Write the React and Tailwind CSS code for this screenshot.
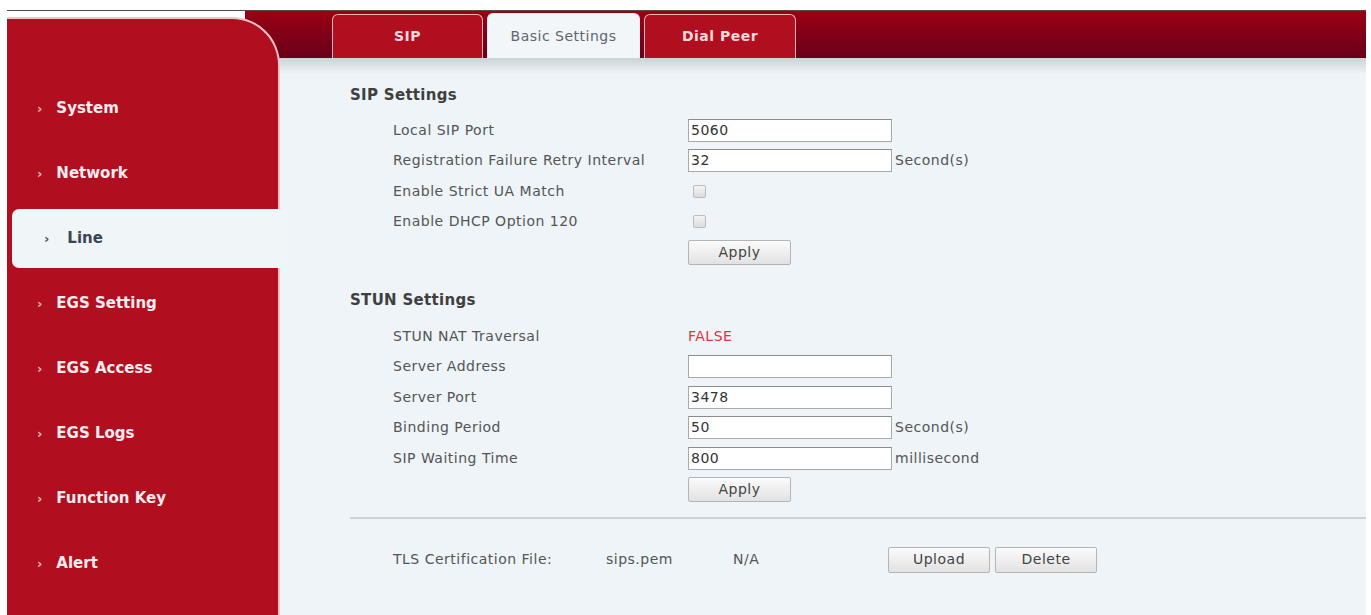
import React from "react";

const menu = ["System", "Network", "Line", "EGS Setting", "EGS Access", "EGS Logs", "Function Key", "Alert"];

function Btn({ children, className = "" }) {
  return (
    <button className={"h-[25px] border border-[#b4b4b4] rounded-[2px] bg-gradient-to-b from-[#fbfbfb] to-[#e2e2e2] text-[14px] tracking-[0.5px] text-[#444] " + className}>
      {children}
    </button>
  );
}

function Field({ value = "" }) {
  return (
    <div className="w-[204px] h-[23px] bg-white border border-[#a9a9a9] border-t-[#8c8c8c] text-[14px] text-[#333] leading-[21px] pl-[2px]">
      {value}
    </div>
  );
}

function Check() {
  return <div className="ml-[5px] w-[13px] h-[13px] rounded-[2px] border border-[#b9bcc0] bg-gradient-to-b from-[#f4f4f4] to-[#dcdcdc]" />;
}

function Row({ label, children, unit }) {
  return (
    <div className="flex items-center h-[30.5px]">
      <div className="w-[295px] text-[#555]">{label}</div>
      {children}
      {unit && <span className="ml-[3px] text-[#555]">{unit}</span>}
    </div>
  );
}

export default function App() {
  return (
    <div className="h-[615px] bg-white pt-[10px] pl-[7px] pr-[5px] overflow-hidden font-['DejaVu_Sans',Verdana,sans-serif] text-[14px] tracking-[0.5px]">
      <div className="flex h-full border-t border-[#5a4848]">
        {/* sidebar */}
        <aside className="w-[273px] shrink-0 -mr-[35px] relative z-10 pt-[6px] flex flex-col">
          <nav className="flex-1 bg-[#b10f1f] rounded-tr-[48px] border-t-2 border-r-2 border-[#f1c4c7] pt-[57px] tracking-normal">
            {menu.map((m) =>
              m === "Line" ? (
                <div key={m} className="h-[65px] py-[3px]">
                  <div className="h-full ml-[5px] -mr-[8px] rounded-l-[7px] bg-[#f0f5f8] flex items-center pl-[32px] text-[15px] font-bold text-[#3b4654]">
                    <span className="text-[13px] mr-[18px] text-[#4a5563]">›</span>
                    {m}
                  </div>
                </div>
              ) : (
                <div key={m} className="h-[65px] flex items-center pl-[30px] text-[15px] font-bold text-[#fcecee]">
                  <span className="text-[13px] mr-[14px] text-[#f5b4ba]">›</span>
                  {m}
                </div>
              )
            )}
          </nav>
        </aside>

        {/* main */}
        <main className="flex-1 min-w-0 flex flex-col">
          <div className="h-[47px] shrink-0 bg-gradient-to-b from-[#9b0013] to-[#680018] flex items-end pl-[87px] gap-[4px]">
            <div className="w-[151px] h-[44px] rounded-t-[6px] border border-b-0 border-[#f0b3b8] bg-[#b10f1f] flex items-center justify-center font-bold text-[#f8d9dc]">SIP</div>
            <div className="w-[153px] h-[45px] rounded-t-[6px] border border-b-0 border-[#e6ecef] bg-[#f2f6f8] flex items-center justify-center text-[#5d6670]">Basic Settings</div>
            <div className="w-[152px] h-[44px] rounded-t-[6px] border border-b-0 border-[#f0b3b8] bg-[#b10f1f] flex items-center justify-center font-bold text-[#f8d9dc]">Dial Peer</div>
          </div>

          <div className="flex-1 bg-[#eef4f7]">
            <div className="h-[16px] bg-gradient-to-b from-[#cbd3d6] to-[#eef4f7]" />
            <div className="pl-[105px]">
              <div className="mt-[11px] h-[20px] leading-[20px] font-bold text-[15px] tracking-[0.3px] text-[#3f3f3f]">SIP Settings</div>
              <div className="pl-[43px] mt-[10px]">
                <Row label="Local SIP Port"><Field value="5060" /></Row>
                <Row label="Registration Failure Retry Interval" unit="Second(s)"><Field value="32" /></Row>
                <Row label="Enable Strict UA Match"><Check /></Row>
                <Row label="Enable DHCP Option 120"><Check /></Row>
                <div className="flex items-center h-[31px] pl-[295px]">
                  <Btn className="w-[103px]">Apply</Btn>
                </div>
              </div>

              <div className="mt-[22px] h-[20px] leading-[20px] font-bold text-[15px] tracking-[0.3px] text-[#3f3f3f]">STUN Settings</div>
              <div className="pl-[43px] mt-[11px]">
                <Row label="STUN NAT Traversal"><span className="text-[#e0323f]">FALSE</span></Row>
                <Row label="Server Address"><Field /></Row>
                <Row label="Server Port"><Field value="3478" /></Row>
                <Row label="Binding Period" unit="Second(s)"><Field value="50" /></Row>
                <Row label="SIP Waiting Time" unit="millisecond"><Field value="800" /></Row>
                <div className="flex items-center h-[31px] pl-[295px]">
                  <Btn className="w-[103px]">Apply</Btn>
                </div>
              </div>

              <div className="mt-[12px] h-[2px] bg-[#cdd2d6]" />

              <div className="mt-[28px] pl-[43px] flex items-center h-[26px] text-[#555]">
                <span className="w-[213px]">TLS Certification File:</span>
                <span className="w-[127px]">sips.pem</span>
                <span className="w-[155px]">N/A</span>
                <Btn className="w-[102px] h-[26px]">Upload</Btn>
                <Btn className="w-[102px] h-[26px] ml-[5px]">Delete</Btn>
              </div>
            </div>
          </div>
        </main>
      </div>
    </div>
  );
}
